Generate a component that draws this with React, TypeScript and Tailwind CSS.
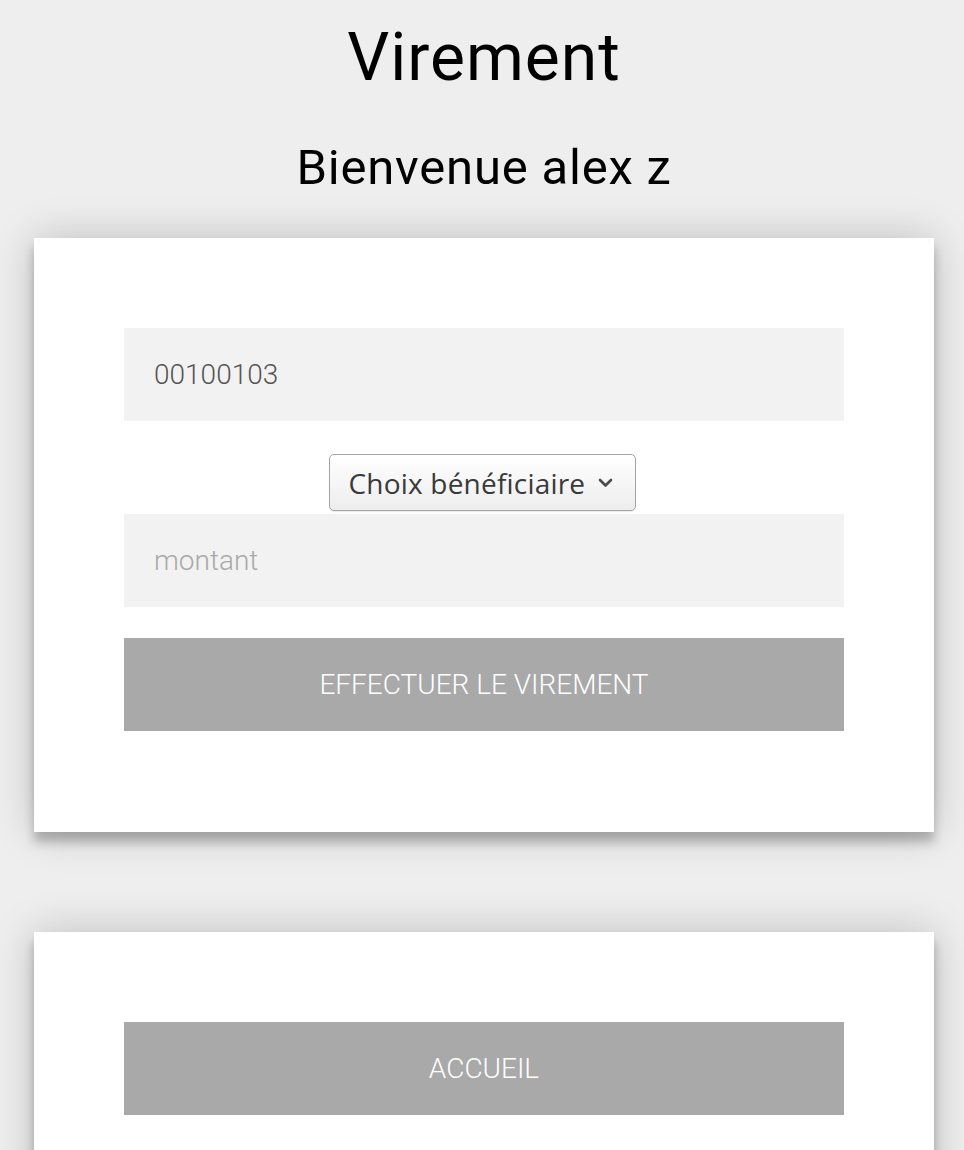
import React, { useState } from "react";

const cardShadow =
  "shadow-[0_0_40px_0_rgba(0,0,0,0.2),0_10px_10px_0_rgba(0,0,0,0.24)]";

export default function App() {
  const [compte, setCompte] = useState("00100103");
  const [montant, setMontant] = useState("");

  return (
    <div className="min-h-[1150px] bg-[#eeeeee] pl-[4px] font-['Roboto',sans-serif] flex flex-col items-center overflow-hidden">
      <h1 className="mt-[19px] text-[66px] leading-[77px] tracking-[1px] font-normal text-black">
        Virement
      </h1>
      <h2 className="mt-[43px] text-[49px] leading-[57px] tracking-[0.8px] font-normal text-black">
        Bienvenue alex z
      </h2>

      <div className={`mt-[42px] w-[900px] bg-white px-[90px] pt-[90px] pb-[101px] ${cardShadow}`}>
        <input
          className="block w-full bg-[#f2f2f2] px-[30px] py-[30px] text-[28px] leading-[33px] font-light text-[#555] outline-none placeholder:text-[#a9a9a9]"
          value={compte}
          onChange={(e) => setCompte(e.target.value)}
        />
        <div className="mt-[33px] mb-[3px] flex justify-center pr-[4px]">
          <button className="flex h-[57px] w-[307px] items-center rounded-[5px] border border-[#a3a3a3] bg-gradient-to-b from-white to-[#ededed] pl-[19px] font-['Open_Sans',sans-serif] text-[28px] tracking-[0.2px] text-[#3a3a3a] shadow-[0_1px_1px_rgba(0,0,0,0.08)]">
            <span>Choix bénéficiaire</span>
            <svg className="ml-[13px]" width="15" height="10" viewBox="0 0 15 10" fill="none">
              <path d="M2 2l5.5 5.5L13 2" stroke="#4a4a4a" strokeWidth="2.6" strokeLinecap="round" strokeLinejoin="round" />
            </svg>
          </button>
        </div>
        <input
          className="block w-full bg-[#f2f2f2] px-[30px] py-[30px] text-[28px] leading-[33px] font-light text-[#555] outline-none placeholder:text-[#a9a9a9]"
          placeholder="montant"
          value={montant}
          onChange={(e) => setMontant(e.target.value)}
        />
        <button className="mt-[31px] block w-full bg-[#a9a9a9] py-[30px] text-[28px] leading-[33px] font-light uppercase text-white">
          Effectuer le virement
        </button>
      </div>

      <div className={`mt-[100px] w-[900px] bg-white p-[90px] ${cardShadow}`}>
        <button className="block w-full bg-[#a9a9a9] py-[30px] text-[28px] leading-[33px] font-light uppercase text-white">
          Accueil
        </button>
      </div>
    </div>
  );
}
